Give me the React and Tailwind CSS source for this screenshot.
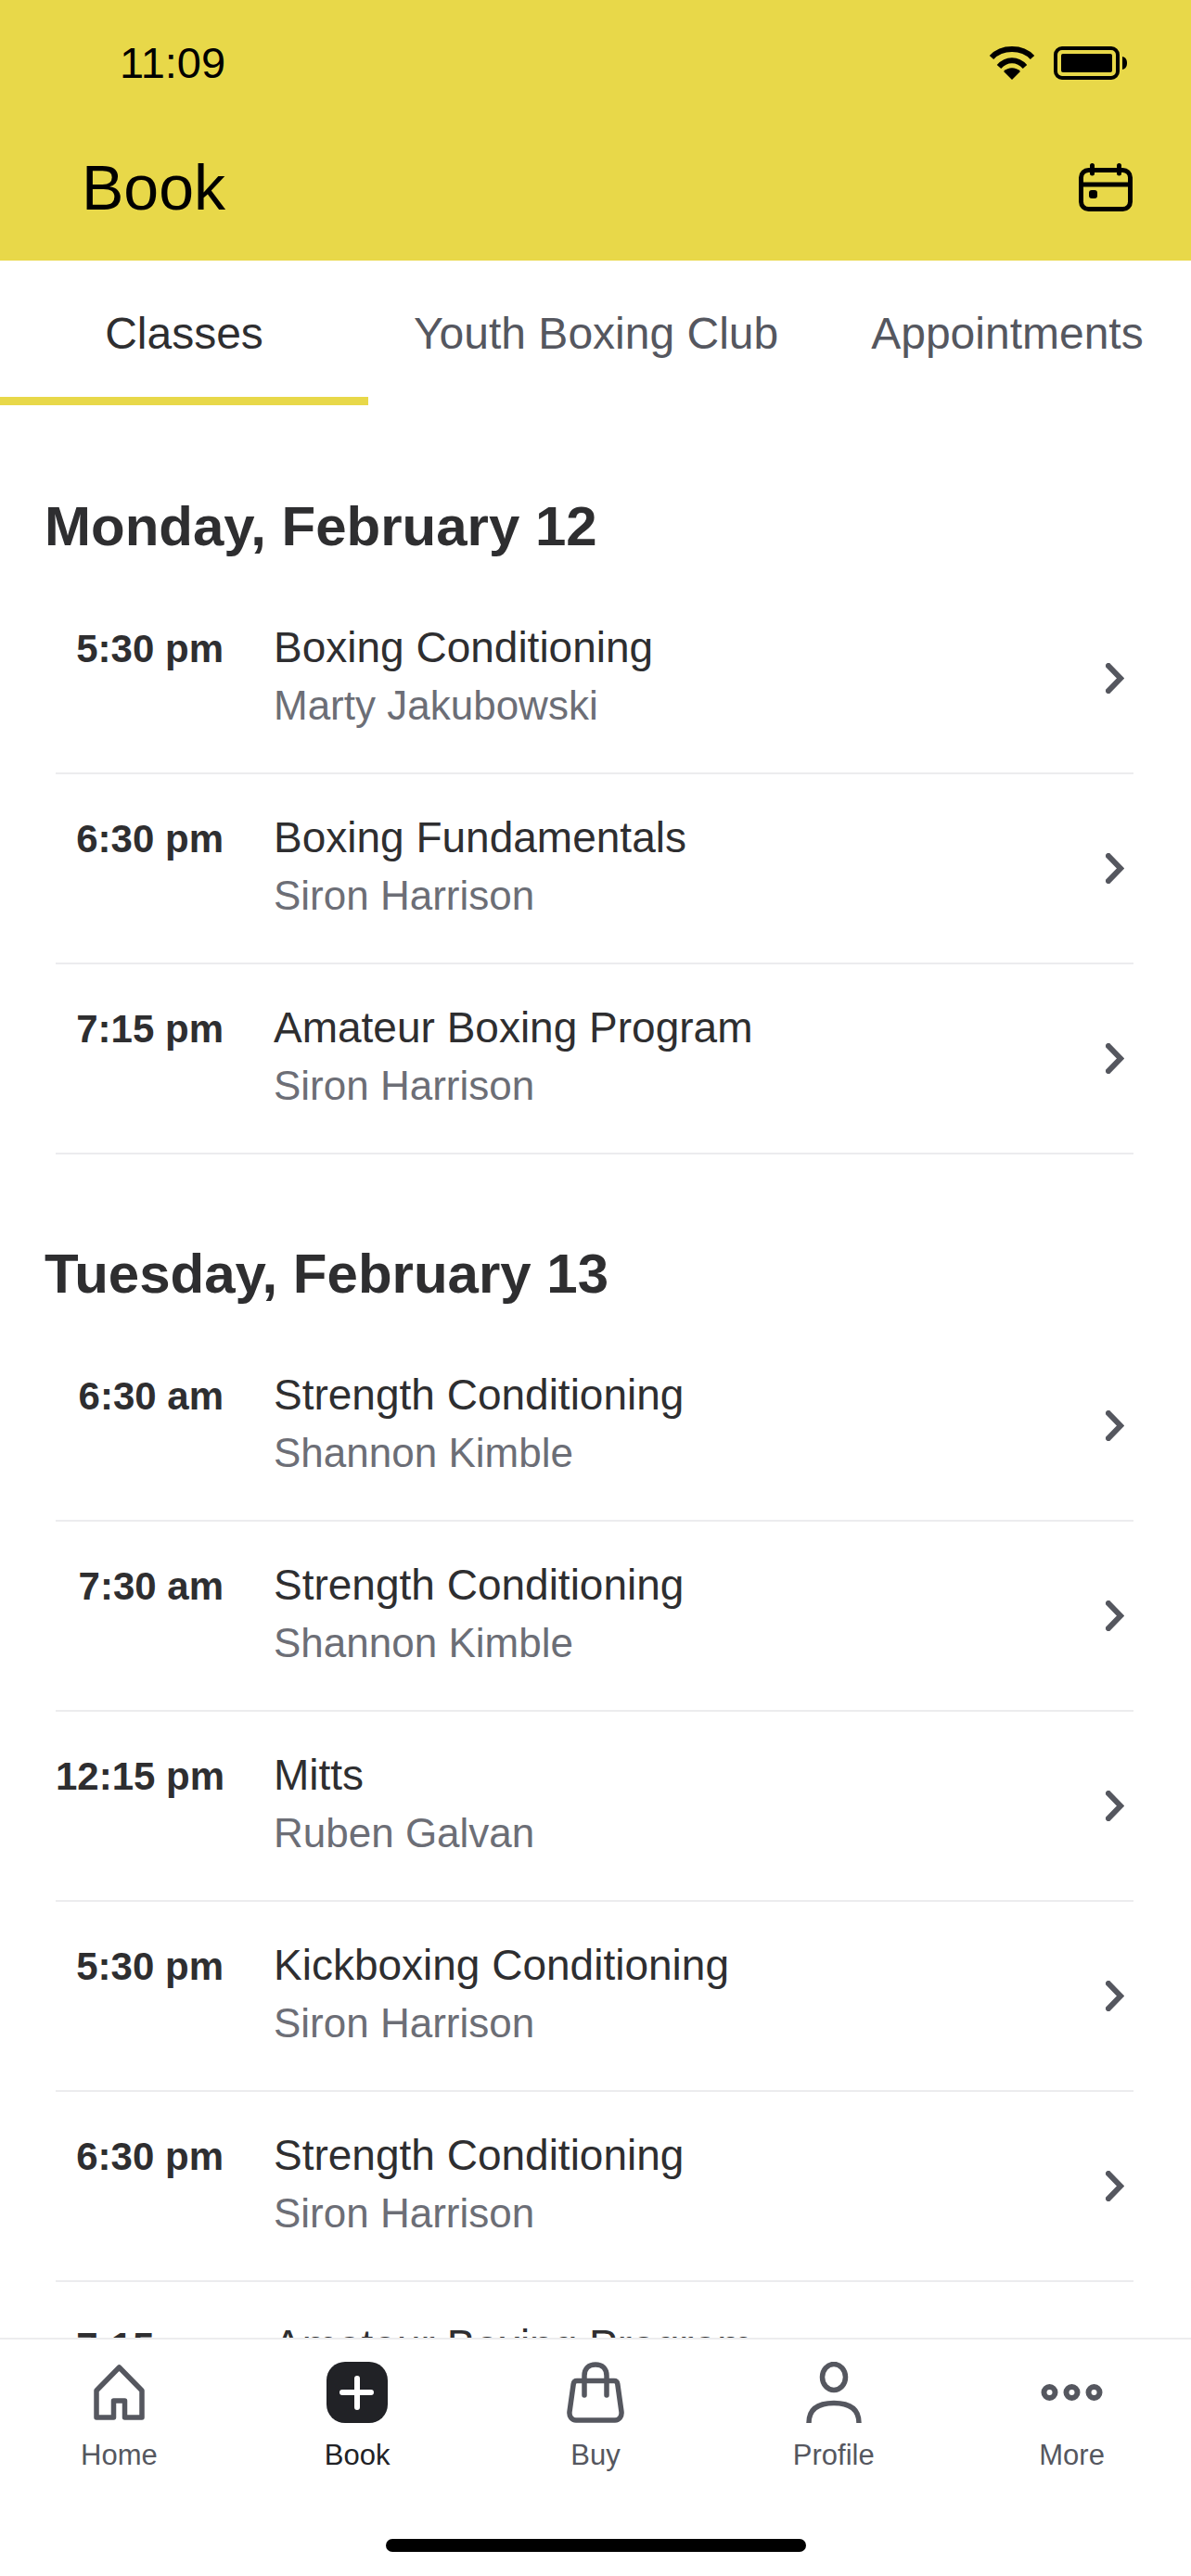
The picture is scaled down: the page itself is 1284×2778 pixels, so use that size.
const DAYS = [
  {
    title: 'Monday, February 12',
    classes: [
      { time: '5:30 pm', name: 'Boxing Conditioning', coach: 'Marty Jakubowski' },
      { time: '6:30 pm', name: 'Boxing Fundamentals', coach: 'Siron Harrison' },
      { time: '7:15 pm', name: 'Amateur Boxing Program', coach: 'Siron Harrison' },
    ],
  },
  {
    title: 'Tuesday, February 13',
    classes: [
      { time: '6:30 am', name: 'Strength Conditioning', coach: 'Shannon Kimble' },
      { time: '7:30 am', name: 'Strength Conditioning', coach: 'Shannon Kimble' },
      { time: '12:15 pm', name: 'Mitts', coach: 'Ruben Galvan' },
      { time: '5:30 pm', name: 'Kickboxing Conditioning', coach: 'Siron Harrison' },
      { time: '6:30 pm', name: 'Strength Conditioning', coach: 'Siron Harrison' },
      { time: '7:15 pm', name: 'Amateur Boxing Program', coach: 'Siron Harrison' },
    ],
  },
]

function WifiIcon() {
  return (
    <svg width="50" height="36" viewBox="0 0 50 36">
      <path d="M3 12C14 0 36 0 47 12" fill="none" stroke="#000" strokeWidth="6" />
      <path d="M11 22C19 13 31 13 39 22" fill="none" stroke="#000" strokeWidth="6" />
      <path d="M25 36L16 27C21 22 29 22 34 27Z" fill="#000" />
    </svg>
  )
}

function BatteryIcon() {
  return (
    <svg width="80" height="36" viewBox="0 0 80 36">
      <rect x="2" y="2" width="67" height="32" rx="7" fill="none" stroke="#000" strokeWidth="4" />
      <rect x="8" y="8" width="55" height="20" rx="2" fill="#000" />
      <path d="M74 11C78 12 79 15 79 18C79 21 78 24 74 25Z" fill="#000" />
    </svg>
  )
}

function CalendarIcon() {
  return (
    <svg width="58" height="52" viewBox="0 0 58 52" fill="none" stroke="#000">
      <rect x="2.5" y="7.5" width="53" height="42" rx="8" strokeWidth="5" />
      <path d="M2.5 23H55.5" strokeWidth="5" />
      <path d="M14.5 2.5V11M43.5 2.5V11" strokeWidth="5" strokeLinecap="round" />
      <rect x="11" y="29" width="9" height="9" rx="3" fill="#000" stroke="none" />
    </svg>
  )
}

function Chevron() {
  return (
    <svg width="20" height="33" viewBox="0 0 20 33" fill="none" stroke="#55575f" strokeWidth="6" className="shrink-0">
      <path d="M3 3L16 16.5L3 30" strokeLinecap="square" />
    </svg>
  )
}

function NavIcon({ name }) {
  if (name === 'Home') {
    return (
      <svg width="55" height="60" viewBox="0 0 55 60" fill="none" stroke="#55575f" strokeWidth="5.5">
        <path d="M27.5 3L3 28V57H21.5V39H33.5V57H52V28Z" strokeLinejoin="round" />
      </svg>
    )
  }
  if (name === 'Book') {
    return (
      <svg width="66" height="66" viewBox="0 0 66 66">
        <rect width="66" height="66" rx="20" fill="#212226" />
        <path d="M33 18V49M17 33H48" stroke="#fff" strokeWidth="6" strokeLinecap="round" />
      </svg>
    )
  }
  if (name === 'Buy') {
    return (
      <svg width="62" height="66" viewBox="0 0 62 66" fill="none" stroke="#55575f" strokeWidth="5.5">
        <path d="M11 20.5H51C53 20.5 54.5 22 54.8 24L59 54C59.5 59 56.5 63 52 63H10C5.5 63 2.5 59 3 54L7.2 24C7.5 22 9 20.5 11 20.5Z" strokeLinejoin="round" />
        <path d="M19 36V15C19 7 24 3 31 3C38 3 43 7 43 15V36" strokeLinecap="round" />
      </svg>
    )
  }
  if (name === 'Profile') {
    return (
      <svg width="60" height="66" viewBox="0 0 60 66" fill="none" stroke="#55575f" strokeWidth="5.5">
        <ellipse cx="30" cy="16.5" rx="12.5" ry="14" />
        <path d="M3 66C3 50 14 44.5 30 44.5C46 44.5 57 50 57 66" />
      </svg>
    )
  }
  return (
    <svg width="67" height="18" viewBox="0 0 67 18" fill="none" stroke="#55575f" strokeWidth="6">
      <circle cx="9.5" cy="9" r="6" />
      <circle cx="33.5" cy="9" r="6" />
      <circle cx="57.5" cy="9" r="6" />
    </svg>
  )
}

function ClassRow({ item }) {
  return (
    <div className="ml-[60px] mr-[62px] h-[205px] border-b-2 border-[#ececee] flex items-center">
      <div className="flex-1 min-w-0 flex items-baseline pb-[4px]">
        <div className="w-[181px] shrink-0 text-right text-[42px] leading-[48px] font-bold text-[#2e2e30] whitespace-nowrap">
          {item.time}
        </div>
        <div className="ml-[54px]">
          <div className="text-[46px] leading-[54px] text-[#2e2e30]">{item.name}</div>
          <div className="mt-[9px] text-[44px] leading-[54px] text-[#6c6e76]">{item.coach}</div>
        </div>
      </div>
      <div className="mr-[10px]">
        <Chevron />
      </div>
    </div>
  )
}

export default function App() {
  return (
    <div className="relative h-[2778px] w-[1284px] overflow-hidden bg-white font-['Liberation_Sans',Arial,sans-serif]">
      {/* Yellow header with status bar */}
      <header className="h-[281px] bg-[#e8d849]">
        <div className="flex items-center justify-between pl-[129px] pr-[68px] pt-[42px]">
          <span className="text-[47px] leading-[52px] text-black">11:09</span>
          <div className="flex items-center gap-[20px]">
            <WifiIcon />
            <BatteryIcon />
          </div>
        </div>
        <div className="flex items-center justify-between pl-[88px] pr-[63px] mt-[68px]">
          <h1 className="text-[68px] leading-[80px] text-black">Book</h1>
          <CalendarIcon />
        </div>
      </header>

      {/* Tabs */}
      <nav className="flex h-[156px] text-[48px] text-[#55575f] whitespace-nowrap">
        <div className="w-[397px] h-[156px] border-b-[9px] border-[#e8d849] flex items-center justify-center pt-[10px] text-[#2e2e30]">
          Classes
        </div>
        <div className="pl-[49px] pr-[100px] pt-[1px] flex items-center">Youth Boxing Club</div>
        <div className="pt-[1px] flex items-center">Appointments</div>
      </nav>

      {/* Class list */}
      <main>
        {DAYS.map((day, i) => (
          <section key={day.title} className={i === 0 ? 'pt-[96px]' : 'pt-[94px]'}>
            <h2 className="pl-[48px] text-[60px] leading-[70px] font-bold text-[#2e2e30]">{day.title}</h2>
            <div className="mt-[27px]">
              {day.classes.map((item, j) => (
                <ClassRow key={j} item={item} />
              ))}
            </div>
          </section>
        ))}
      </main>

      {/* Bottom tab bar, sits over the scrolling list */}
      <footer className="absolute bottom-0 left-0 right-0 h-[257px] bg-white border-t-2 border-[#ececee]">
        <div className="grid grid-cols-5 pt-[24px]">
          {['Home', 'Book', 'Buy', 'Profile', 'More'].map((name) => (
            <div key={name} className="flex flex-col items-center">
              <div className="h-[66px] flex items-center justify-center">
                <NavIcon name={name} />
              </div>
              <span className={`mt-[17px] text-[31px] leading-[36px] ${name === 'Book' ? 'text-[#212226]' : 'text-[#55575f]'}`}>
                {name}
              </span>
            </div>
          ))}
        </div>
        <div className="absolute bottom-[26px] left-[416px] w-[453px] h-[14px] rounded-full bg-black" />
      </footer>
    </div>
  )
}
